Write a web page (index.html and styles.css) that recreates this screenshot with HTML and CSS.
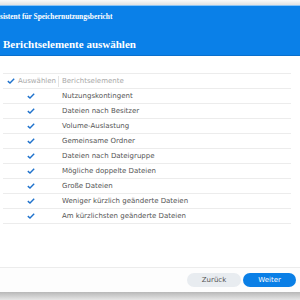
FILE: index.html
```html
<!DOCTYPE html>
<html lang="de">
<head>
    <meta charset="UTF-8">
    <title>Assistent für Speichernutzungsbericht</title>
    <link rel="stylesheet" href="styles.css">
</head>
<body>
    <div class="window">
        <div class="topbar"></div>
        <div class="header">
            <div class="subtitle">sistent für Speichernutzungsbericht</div>
            <div class="title">Berichtselemente auswählen</div>
        </div>
        <div class="content">
            <div class="table">
                <div class="row head">
                    <div class="col-select">
                        <svg class="check" viewBox="0 0 8 6"><path d="M0.8 3.1 L3 5 L7.2 0.8" /></svg>
                        <span>Auswählen</span>
                    </div>
                    <div class="col-name">Berichtselemente</div>
                </div>
                <div class="row">
                    <div class="col-select center"><svg class="check" viewBox="0 0 8 6"><path d="M0.8 3.1 L3 5 L7.2 0.8" /></svg></div>
                    <div class="col-name">Nutzungskontingent</div>
                </div>
                <div class="row">
                    <div class="col-select center"><svg class="check" viewBox="0 0 8 6"><path d="M0.8 3.1 L3 5 L7.2 0.8" /></svg></div>
                    <div class="col-name">Dateien nach Besitzer</div>
                </div>
                <div class="row">
                    <div class="col-select center"><svg class="check" viewBox="0 0 8 6"><path d="M0.8 3.1 L3 5 L7.2 0.8" /></svg></div>
                    <div class="col-name">Volume-Auslastung</div>
                </div>
                <div class="row">
                    <div class="col-select center"><svg class="check" viewBox="0 0 8 6"><path d="M0.8 3.1 L3 5 L7.2 0.8" /></svg></div>
                    <div class="col-name">Gemeinsame Ordner</div>
                </div>
                <div class="row">
                    <div class="col-select center"><svg class="check" viewBox="0 0 8 6"><path d="M0.8 3.1 L3 5 L7.2 0.8" /></svg></div>
                    <div class="col-name">Dateien nach Dateigruppe</div>
                </div>
                <div class="row">
                    <div class="col-select center"><svg class="check" viewBox="0 0 8 6"><path d="M0.8 3.1 L3 5 L7.2 0.8" /></svg></div>
                    <div class="col-name">Mögliche doppelte Dateien</div>
                </div>
                <div class="row">
                    <div class="col-select center"><svg class="check" viewBox="0 0 8 6"><path d="M0.8 3.1 L3 5 L7.2 0.8" /></svg></div>
                    <div class="col-name">Große Dateien</div>
                </div>
                <div class="row">
                    <div class="col-select center"><svg class="check" viewBox="0 0 8 6"><path d="M0.8 3.1 L3 5 L7.2 0.8" /></svg></div>
                    <div class="col-name">Weniger kürzlich geänderte Dateien</div>
                </div>
                <div class="row">
                    <div class="col-select center"><svg class="check" viewBox="0 0 8 6"><path d="M0.8 3.1 L3 5 L7.2 0.8" /></svg></div>
                    <div class="col-name">Am kürzlichsten geänderte Dateien</div>
                </div>
            </div>
        </div>
        <div class="footer">
            <button class="btn btn-back">Zurück</button>
            <button class="btn btn-next">Weiter</button>
        </div>
        <div class="bottombar"></div>
    </div>
</body>
</html>
```

FILE: styles.css
```css
body {
    margin: 0;
    background: #ffffff;
    font-family: "DejaVu Sans", Verdana, sans-serif;
}
.window {
    display: flex;
    flex-direction: column;
    width: 300px;
    height: 300px;
    overflow: hidden;
}
.topbar {
    height: 6px;
    background: linear-gradient(#fafafa, #e2e2e2);
    border-bottom: 1px solid #8cc4f4;
    box-sizing: border-box;
}
.header {
    height: 50px;
    background: #0a80e8;
    border-bottom: 1px solid #0a6fcc;
    box-sizing: border-box;
    color: #ffffff;
}
.subtitle {
    font-family: "Liberation Serif", "DejaVu Serif", serif;
    font-size: 7.4px;
    font-weight: bold;
    margin-top: 6px;
    line-height: 10px;
}
.title {
    font-family: "Liberation Serif", "DejaVu Serif", serif;
    font-size: 11px;
    font-weight: bold;
    margin-top: 16px;
    padding-left: 3px;
    line-height: 12px;
}
.content {
    flex: 1;
    padding: 17px 9px 0 3px;
}
.table {
    border-top: 1px solid #ececec;
}
.row {
    display: flex;
    align-items: center;
    height: 15px;
    border-bottom: 1px solid #ececec;
    box-sizing: border-box;
    font-size: 7px;
    color: #555555;
}
.col-select {
    width: 56px;
    display: flex;
    align-items: center;
    gap: 3px;
    padding-left: 4px;
    box-sizing: border-box;
    height: 100%;
}
.col-select.center {
    justify-content: center;
    padding-left: 0;
}
.head {
    color: #a8a8a8;
}
.head .col-select {
    border-right: 1px solid #e4e4e4;
    height: 11px;
}
.col-name {
    padding-left: 3px;
}
.check {
    width: 8px;
    height: 6px;
    fill: none;
    stroke: #1f72cc;
    stroke-width: 1.4;
}
.footer {
    height: 25px;
    border-top: 1px solid #ececec;
    box-sizing: border-box;
    background: #fdfdfd;
    display: flex;
    justify-content: flex-end;
    align-items: center;
    gap: 2px;
    padding-right: 4px;
}
.btn {
    height: 14px;
    border: none;
    border-radius: 7px;
    font-family: "DejaVu Sans", Verdana, sans-serif;
    font-size: 7px;
    padding: 0;
}
.btn-back {
    width: 54px;
    background: #e8ecf0;
    color: #555555;
}
.btn-next {
    width: 53px;
    background: #0a7fe6;
    color: #ffffff;
}
.bottombar {
    height: 8px;
    background: linear-gradient(#b8b8b8, #e6e6e6);
}
```
